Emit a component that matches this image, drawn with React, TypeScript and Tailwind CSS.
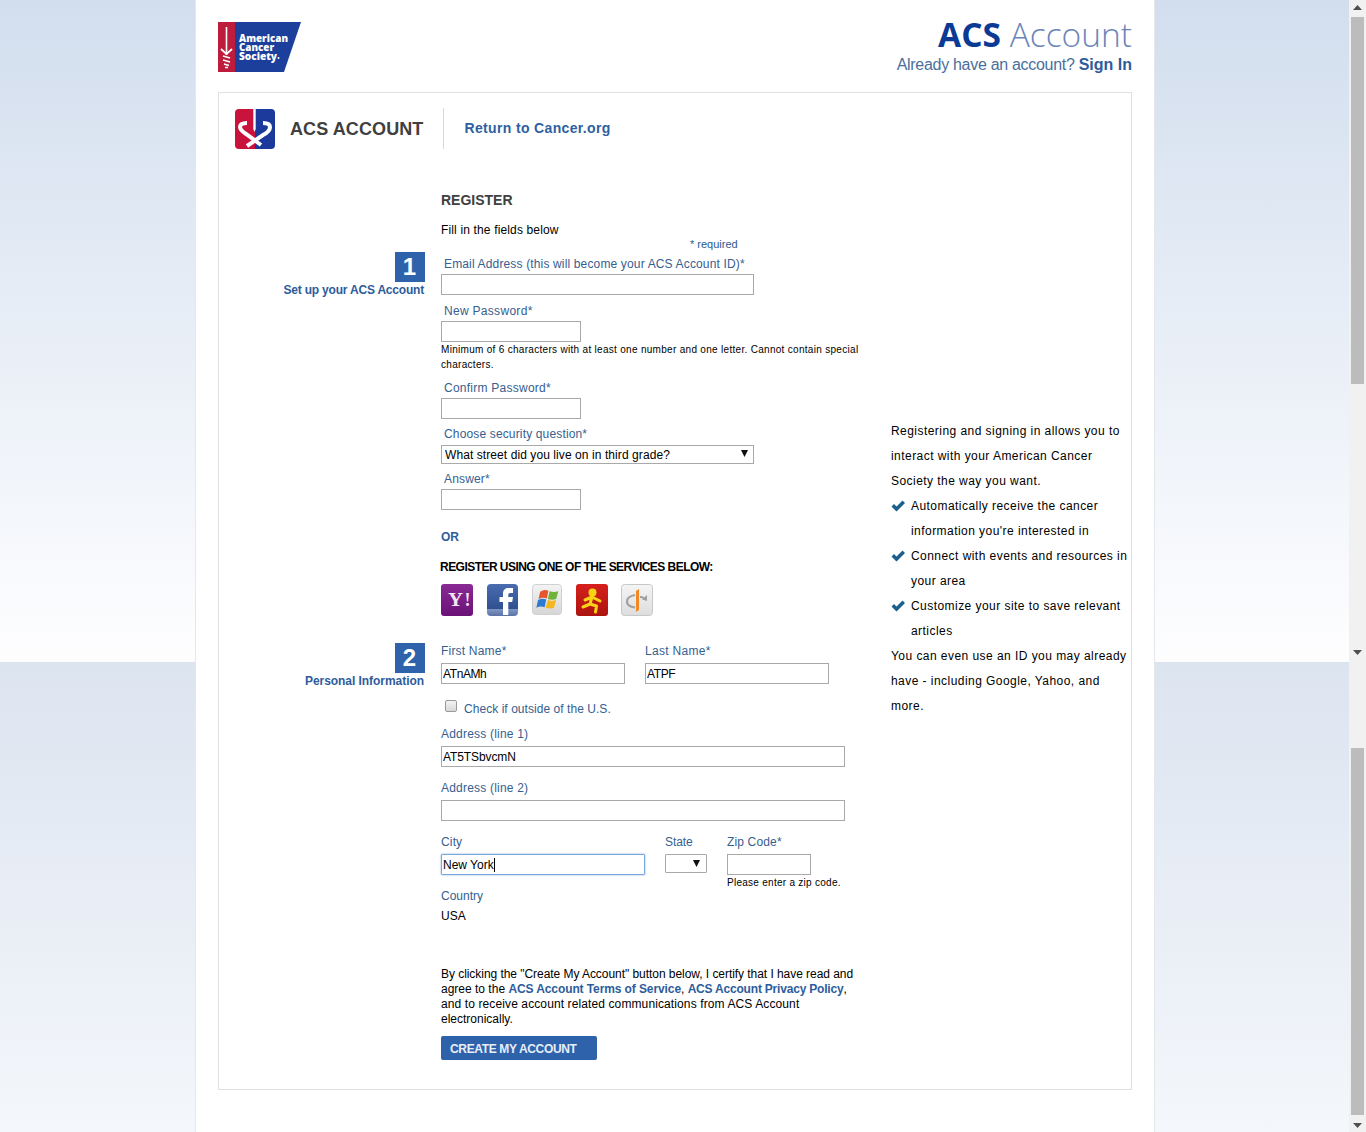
import React from "react";

const arial = "font-['Liberation_Sans',Arial,sans-serif]";

const Label = ({
  children,
  className = "",
  tracking = "tracking-[0.15px]",
}: {
  children: React.ReactNode;
  className?: string;
  tracking?: string;
}) => <div className={`h-[15px] whitespace-nowrap pt-[1px] text-[12px] leading-[15px] text-[#36608f] ${tracking} ${className}`}>{children}</div>;

const TextInput = ({ value = "", className = "" }: { value?: string; className?: string }) => (
  <input
    readOnly
    value={value}
    className={`block h-[21px] border border-[#a9a9a9] bg-white px-[1px] text-[12px] text-black outline-none ${className}`}
  />
);

const Arrow = () => (
  <svg width="7" height="7" viewBox="0 0 7 7" className="absolute right-[6px] top-[5px]">
    <path d="M0 0h7L3.500 7z" fill="#111" />
  </svg>
);

const StepLabel = ({ n, title, tracking }: { n: number; title: string; tracking: string }) => (
  <div className="flex w-[206px] flex-col items-end">
    <div className="flex h-[30px] w-[30px] items-center justify-center bg-[#2e63ac] pr-[1px] text-[24px] font-bold text-white">{n}</div>
    <div className={`mr-[1px] mt-[1px] whitespace-nowrap text-[12px] font-bold leading-[15px] text-[#2d5c9c] ${tracking}`}>{title}</div>
  </div>
);

const AcsLogo = () => (
  <svg width="83" height="50" viewBox="0 0 83 50" className="block">
    <rect width="17" height="50" fill="#bd1c3c" />
    <path d="M17 0H83L66 50H17z" fill="#1b3f9b" />
    <path d="M8.500 5v28" stroke="#fff" strokeWidth="1.600" />
    <path d="M3 27l5.500 5 5.500-5M5 34l7 2M5 38l7 2M6 42l5 1.500M7 45.500h3" stroke="#fff" strokeWidth="1.700" fill="none" />
    <g fill="#fff" fontFamily="'Open Sans',sans-serif" fontWeight="800" fontSize="10.500">
      <text x="21" y="20" textLength="49" lengthAdjust="spacingAndGlyphs">American</text>
      <text x="21" y="29" textLength="35" lengthAdjust="spacingAndGlyphs">Cancer</text>
      <text x="21" y="38" textLength="38" lengthAdjust="spacingAndGlyphs">Society</text>
    </g>
    <circle cx="60.500" cy="36" r="1" fill="#fff" />
  </svg>
);

const SnakeLogo = () => (
  <svg width="40" height="40" viewBox="0 0 40 40" className="mt-[1px] block self-start">
    <path d="M4 0h16v40H4a4 4 0 0 1-4-4V4a4 4 0 0 1 4-4z" fill="#c9123c" />
    <path d="M20 0h16a4 4 0 0 1 4 4v32a4 4 0 0 1-4 4H20z" fill="#1c3a9c" />
    <path d="M18.300 0h2.400v20l-1.200 3-1.200-3z" fill="#fff" />
    <path d="M12 14C8 14 5 15 5 18C5 21 8 23 11 25L26 36" stroke="#fff" strokeWidth="4" fill="none" />
    <path d="M28 14C32 14 35 15 35 18C35 21 32 24 28 26L12 37" stroke="#fff" strokeWidth="4" fill="none" />
  </svg>
);

const YahooIcon = () => (
  <svg width="32" height="32" viewBox="0 0 32 32" className="block">
    <defs>
      <linearGradient id="yh" x1="0" y1="0" x2="0" y2="1">
        <stop offset="0" stopColor="#8a2a94" />
        <stop offset="1" stopColor="#6a1278" />
      </linearGradient>
    </defs>
    <rect width="32" height="32" rx="3" fill="url(#yh)" />
    <text x="7" y="22" fontFamily="'Liberation Serif',serif" fontWeight="700" fontSize="18" textLength="15" lengthAdjust="spacingAndGlyphs" fill="#f3e6f3">Y</text>
    <text x="23.500" y="22" fontFamily="'Liberation Serif',serif" fontWeight="700" fontSize="18" fill="#f3e6f3">!</text>
  </svg>
);

const FacebookIcon = () => (
  <svg width="31" height="32" viewBox="0 0 31 32" className="block">
    <defs>
      <linearGradient id="fb" x1="0" y1="0" x2="0" y2="1">
        <stop offset="0" stopColor="#4a6db0" />
        <stop offset="0.78" stopColor="#2f4f90" />
        <stop offset="0.79" stopColor="#7f95c2" />
        <stop offset="1" stopColor="#5a72a8" />
      </linearGradient>
    </defs>
    <rect width="31" height="32" rx="4" fill="url(#fb)" />
    <path d="M16 31V18h-3.500v-5H16V9.500c0-3.500 2.200-5.500 5.500-5.500H26v5h-2.700c-1.500 0-2 .7-2 2V13H26l-.8 5h-3.900v13z" fill="#fff" />
  </svg>
);

const WindowsIcon = () => (
  <svg width="30" height="32" viewBox="0 0 30 32" className="block">
    <defs>
      <linearGradient id="wn" x1="0" y1="0" x2="0" y2="1">
        <stop offset="0" stopColor="#f4f4f4" />
        <stop offset="1" stopColor="#d6d6d6" />
      </linearGradient>
    </defs>
    <rect x="0.500" y="0.500" width="29" height="30" rx="3" fill="url(#wn)" stroke="#d0d0d0" />
    <g transform="translate(0.500,-1) scale(1.100)">
      <path d="M7 8c3-2 5-2 7.500-1l-1.500 7c-2.500-1-4.500-1-7.500 .5z" fill="#e4572e" />
      <path d="M15.500 7.500c3 1 5 1 8 0l-2 7c-2.500 1-5 1-7.500 0z" fill="#6fb23c" />
      <path d="M5 15.500c3-1.500 5-1.500 7.500-.5L11 22c-2.500-1-4.500-1-7.500 .5z" fill="#2c7bd0" />
      <path d="M14 15.500c2.500 1 5 1 7.500 0l-2 7c-2.500 1-5 1-7.500 0z" fill="#f4b81e" />
    </g>
  </svg>
);

const AimIcon = () => (
  <svg width="32" height="32" viewBox="0 0 32 32" className="block">
    <defs>
      <linearGradient id="am" x1="0" y1="0" x2="0" y2="1">
        <stop offset="0" stopColor="#d6201c" />
        <stop offset="1" stopColor="#ac1410" />
      </linearGradient>
    </defs>
    <rect width="32" height="32" rx="3" fill="url(#am)" />
    <circle cx="16.500" cy="8.500" r="4" fill="#fbd316" />
    <path d="M16 13L14 20L7 23M14 20L20.500 22L19.500 28M9 16L16 13L24 17" stroke="#fbd316" strokeWidth="3" fill="none" strokeLinecap="round" strokeLinejoin="round" />
  </svg>
);

const OpenIdIcon = () => (
  <svg width="32" height="32" viewBox="0 0 32 32" className="block">
    <defs>
      <linearGradient id="oi" x1="0" y1="0" x2="0" y2="1">
        <stop offset="0" stopColor="#f5f5f5" />
        <stop offset="1" stopColor="#dddddd" />
      </linearGradient>
    </defs>
    <rect x="0.500" y="0.500" width="31" height="31" rx="3" fill="url(#oi)" stroke="#c8c8c8" />
    <path d="M14 11c-5 1-8 3.500-8 6.500s3 5.500 8 6" stroke="#a0a0a0" strokeWidth="2.200" fill="none" />
    <path d="M19 13c2 0 3 .5 4 1.200" stroke="#a0a0a0" strokeWidth="1.800" fill="none" />
    <path d="M26 11v6l-5-1.500z" fill="#a0a0a0" />
    <path d="M15 7l3-2v21l-3 2z" fill="#f08a24" />
  </svg>
);

const Check = () => (
  <svg width="14" height="12" viewBox="0 0 14 12" className="mt-[6px] shrink-0">
    <path d="M0.500 6.500L3 4l2.500 2.500L11.500 0.500 14 3 5.500 11.500z" fill="#1b5f8e" />
  </svg>
);

const Scrollbar = () => (
  <div className="flex h-[1132px] w-[17px] flex-col items-center bg-[#f1f1f1] pt-[5px]">
    <svg width="9" height="5" viewBox="0 0 9 5" className="block">
      <path d="M0 5h9L4.500 0z" fill="#505050" />
    </svg>
    <div className="mt-[7px] h-[367px] w-[13px] bg-[#bcbcbc]" />
    <svg width="9" height="5" viewBox="0 0 9 5" className="mt-[266px] block">
      <path d="M0 0h9L4.500 5z" fill="#505050" />
    </svg>
    <div className="mt-[93px] h-[367px] w-[13px] bg-[#bcbcbc]" />
    <svg width="9" height="5" viewBox="0 0 9 5" className="mt-[8px] block">
      <path d="M0 0h9L4.500 5z" fill="#505050" />
    </svg>
  </div>
);

export default function App() {
  return (
    <div className={`${arial} flex h-[1132px] w-[1366px] overflow-hidden bg-[linear-gradient(180deg,#d2deee_0,#fefeff_662px,#dce4f0_662px,#f4f7fb_1132px)] text-black`}>
      <div className="w-[1349px] pl-[195px]">
        <div className="h-[1132px] w-[960px] border-x border-[#e4e7ec] bg-white px-[22px]">
          {/* Top banner */}
          <div className="flex h-[92px] w-[914px] justify-between pt-[22px]">
            <AcsLogo />
            <div className="mt-[-10px] flex flex-col items-end">
              <div className="font-['Open_Sans',sans-serif] text-[33.500px] leading-[44px] text-[#6c84b8]">
                <span className="font-bold text-[#0a3a94]">ACS</span> <span className="font-light">Account</span>
              </div>
              <div className="mt-[-1px] flex text-[16px] leading-[20px]">
                <span className="whitespace-pre tracking-[-0.3px] text-[#4a6f9c]">Already have an account? </span>
                <span className="font-bold text-[#2d5c9c]">Sign In</span>
              </div>
            </div>
          </div>

          {/* Main card */}
          <div className="h-[998px] w-[914px] border border-[#e0e0e0]">
            <div className="flex items-center pl-[16px] pt-[15px]">
              <SnakeLogo />
              <div className="ml-[15px] mt-[2px] text-[18px] font-bold tracking-[0.1px] text-[#404040]">ACS ACCOUNT</div>
              <div className="ml-[20px] h-[41px] w-[1px] bg-[#d8d8d8]" />
              <div className="ml-[20px] text-[14px] font-bold tracking-[0.35px] text-[#2f5f9f]">Return to Cancer.org</div>
            </div>

            <div className="flex">
              <div className="w-[672px]">
                <div className="ml-[222px]">
                  <div className="mt-[43px] text-[14px] font-bold leading-[16px] text-[#404040]">REGISTER</div>
                  <div className="mt-[14px] h-[15px] pt-[1px] text-[12px] leading-[15px] tracking-[0.15px]">Fill in the fields below</div>
                  <div className="pl-[249px] text-[11px] leading-[14px] text-[#2a5a8f]">* required</div>
                </div>

                {/* Step 1 */}
                <div className="mt-[1px] flex">
                  <StepLabel n={1} title="Set up your ACS Account" tracking="tracking-[-0.2px]" />
                  <div className="ml-[16px] pt-[4px]">
                    <Label className="ml-[3px]">Email Address (this will become your ACS Account ID)*</Label>
                    <TextInput className="mt-[3px] w-[313px]" />
                    <Label className="ml-[3px] mt-[8px]" tracking="tracking-[0.3px]">New Password*</Label>
                    <TextInput className="mt-[3px] w-[140px]" />
                    <div className="w-[420px] text-[10px] leading-[15px] tracking-[0.3px]">
                      Minimum of 6 characters with at least one number and one letter. Cannot contain special characters.
                    </div>
                    <Label className="ml-[3px] mt-[8px]" tracking="tracking-[0.25px]">Confirm Password*</Label>
                    <TextInput className="mt-[3px] w-[140px]" />
                    <Label className="ml-[3px] mt-[7px]">Choose security question*</Label>
                    <div className="relative mt-[4px] h-[19px] w-[313px]">
                      <select className="block h-[19px] w-[313px] appearance-none rounded-none border border-[#a9a9a9] bg-white pl-[3px] text-[12px] tracking-[0.08px] outline-none">
                        <option>What street did you live on in third grade?</option>
                      </select>
                      <Arrow />
                    </div>
                    <Label className="ml-[3px] mt-[7px]">Answer*</Label>
                    <TextInput className="mt-[3px] w-[140px]" />
                    <div className="mt-[19px] h-[15px] pt-[1px] text-[12px] font-bold leading-[15px] text-[#2d5c9c]">OR</div>
                    <div className="ml-[-1px] mt-[15px] h-[15px] whitespace-nowrap pt-[1px] text-[12px] font-bold leading-[15px] tracking-[-0.54px]">REGISTER USING ONE OF THE SERVICES BELOW:</div>
                    <div className="mt-[10px] flex h-[32px]">
                      <YahooIcon />
                      <div className="ml-[14px]"><FacebookIcon /></div>
                      <div className="ml-[14px]"><WindowsIcon /></div>
                      <div className="ml-[14px]"><AimIcon /></div>
                      <div className="ml-[13px]"><OpenIdIcon /></div>
                    </div>
                  </div>
                </div>

                {/* Step 2 */}
                <div className="mt-[27px] flex">
                  <StepLabel n={2} title="Personal Information" tracking="tracking-[-0.05px]" />
                  <div className="ml-[16px]">
                    <div className="flex gap-[20px]">
                      <div>
                        <Label tracking="tracking-[0.2px]">First Name*</Label>
                        <TextInput value="ATnAMh" className="mt-[5px] w-[184px] tracking-[-0.4px]" />
                      </div>
                      <div>
                        <Label tracking="tracking-[0.3px]">Last Name*</Label>
                        <TextInput value="ATPF" className="mt-[5px] w-[184px] tracking-[-0.4px]" />
                      </div>
                    </div>
                    <div className="mt-[16px] flex h-[15px] items-start">
                      <div className="ml-[4px] h-[12px] w-[12px] rounded-[2px] border border-[#9a9a9a] bg-[linear-gradient(180deg,#f4f4f4,#d8d8d8)]" />
                      <Label className="ml-[7px] mt-[1px]" tracking="tracking-[0.05px]">Check if outside of the U.S.</Label>
                    </div>
                    <Label className="mt-[11px]" tracking="tracking-[0.2px]">Address (line 1)</Label>
                    <TextInput value="AT5TSbvcmN" className="mt-[5px] w-[404px] tracking-[-0.1px]" />
                    <Label className="mt-[13px]" tracking="tracking-[0.2px]">Address (line 2)</Label>
                    <TextInput className="mt-[5px] w-[404px]" />
                    <div className="mt-[13px] flex gap-[20px]">
                      <div className="w-[204px]">
                        <Label>City</Label>
                        <div className="mt-[5px] flex h-[21px] items-center rounded-[1px] border border-[#7ba6dc] px-[1px] text-[12px] shadow-[0_0_2px_#7ba6dc]">
                          New York<span className="h-[14px] w-[1px] bg-black" />
                        </div>
                        <Label className="mt-[13px]" tracking="tracking-[0px]">Country</Label>
                        <div className="mt-[5px] h-[15px] pt-[1px] text-[12px] leading-[15px]">USA</div>
                      </div>
                      <div>
                        <Label tracking="tracking-[-0.1px]">State</Label>
                        <div className="relative mt-[5px] h-[19px] w-[42px] rounded-[1px] border border-[#a9a9a9] bg-white">
                          <Arrow />
                        </div>
                      </div>
                      <div>
                        <Label>Zip Code*</Label>
                        <TextInput className="mt-[5px] w-[84px]" />
                        <div className="whitespace-nowrap text-[10px] leading-[15px] tracking-[0.27px]">Please enter a zip code.</div>
                      </div>
                    </div>
                    <div className="mt-[44px] whitespace-nowrap text-[12px] leading-[15px]">
                      <div className="tracking-[-0.05px]">By clicking the "Create My Account" button below, I certify that I have read and</div>
                      <div className="flex">
                        <span className="whitespace-pre">agree to the </span>
                        <span className="font-bold tracking-[-0.1px] text-[#2d5c9c]">ACS Account Terms of Service</span>
                        <span className="whitespace-pre">, </span>
                        <span className="font-bold tracking-[-0.2px] text-[#2d5c9c]">ACS Account Privacy Policy</span>
                        <span>,</span>
                      </div>
                      <div className="tracking-[0.11px]">and to receive account related communications from ACS Account</div>
                      <div>electronically.</div>
                    </div>
                    <button className="mt-[9px] block h-[24px] w-[156px] rounded-[2px] bg-[#2e63ac] pl-[9px] pt-[2px] text-left text-[12px] font-bold tracking-[-0.35px] text-[#e6eef8]">
                      CREATE MY ACCOUNT
                    </button>
                  </div>
                </div>
              </div>

              {/* Right panel */}
              <div className="mt-[270px] w-[240px] self-start text-[12px] leading-[25px] tracking-[0.45px]">
                <p>Registering and signing in allows you to interact with your American Cancer Society the way you want.</p>
                <div className="flex gap-[6px]"><Check /><p>Automatically receive the cancer information you're interested in</p></div>
                <div className="flex gap-[6px]"><Check /><p>Connect with events and resources in your area</p></div>
                <div className="flex gap-[6px]"><Check /><p>Customize your site to save relevant articles</p></div>
                <p>You can even use an ID you may already have - including Google, Yahoo, and more.</p>
              </div>
            </div>
          </div>
        </div>
      </div>
      <Scrollbar />
    </div>
  );
}
